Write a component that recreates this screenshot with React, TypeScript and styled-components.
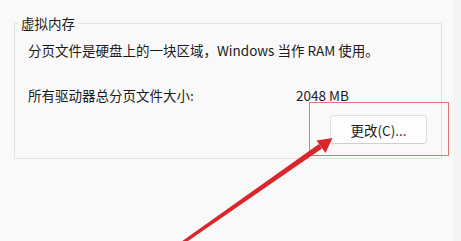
import React from "react";
import styled, { createGlobalStyle } from "styled-components";

const Global = createGlobalStyle`
  html, body { margin: 0; padding: 0; background: #f9f9f9; }
  body { font-family: "Noto Sans CJK SC", "Noto Sans", sans-serif; color: #1b1b1b; }
`;

const Page = styled.div`
  position: relative;
  width: 461px;
  height: 241px;
  overflow: hidden;
  background: #f9f9f9;
  display: flex;
`;

const Main = styled.div`
  flex: 1;
  padding: 16px 0 0 14px;
`;

const SideStrip = styled.div`
  width: 6px;
  background: #f5f5f5;
  border-left: 1px solid #efefef;
`;

const Group = styled.fieldset`
  width: 428px;
  box-sizing: border-box;
  margin: 0;
  padding: 10px 14px 14px 13px;
  border: 1px solid #e1e1e1;
  border-radius: 1px;
`;

const Legend = styled.legend`
  margin-left: -10px;
  padding: 0 3px;
  font-size: 13.5px;
  line-height: 14px;
  color: #1b1b1b;
`;

const Description = styled.div`
  font-size: 13.5px;
  line-height: 20px;
  white-space: nowrap;
`;

const InfoRow = styled.div`
  display: grid;
  grid-template-columns: 268px auto;
  margin-top: 25px;
  font-size: 13.5px;
  line-height: 20px;
  white-space: nowrap;
`;

const ButtonRow = styled.div`
  display: flex;
  justify-content: flex-end;
  margin-top: 10px;
`;

const Button = styled.button`
  width: 97px;
  height: 29px;
  box-sizing: border-box;
  border: 1px solid #e0e0e0;
  border-bottom-color: #cfcfcf;
  border-radius: 4px;
  background: #fdfdfd;
  font-family: inherit;
  font-size: 13.5px;
  color: #1b1b1b;
  padding: 0;
`;

const Highlight = styled.div`
  position: absolute;
  left: 309px;
  top: 102px;
  width: 140px;
  height: 54px;
  box-sizing: border-box;
  border: 1.5px solid rgba(220, 70, 70, 0.75);
  pointer-events: none;
`;

const ArrowLayer = styled.svg`
  position: absolute;
  left: 0;
  top: 0;
  pointer-events: none;
`;

export default function App() {
  return (
    <Page>
      <Global />
      <Main>
        <Group>
          <Legend>虚拟内存</Legend>
          <Description>分页文件是硬盘上的一块区域，Windows 当作 RAM 使用。</Description>
          <InfoRow>
            <span>所有驱动器总分页文件大小:</span>
            <span>2048 MB</span>
          </InfoRow>
          <ButtonRow>
            <Button>更改(C)...</Button>
          </ButtonRow>
        </Group>
      </Main>
      <SideStrip />
      <Highlight />
      <ArrowLayer width="461" height="241" viewBox="0 0 461 241">
        <polygon points="179.5,243 181.5,245.5 322,148.5 319,144" fill="#d8262b" />
        <polygon points="332.5,138 316.5,140.5 325.5,153" fill="#d8262b" />
      </ArrowLayer>
    </Page>
  );
}
